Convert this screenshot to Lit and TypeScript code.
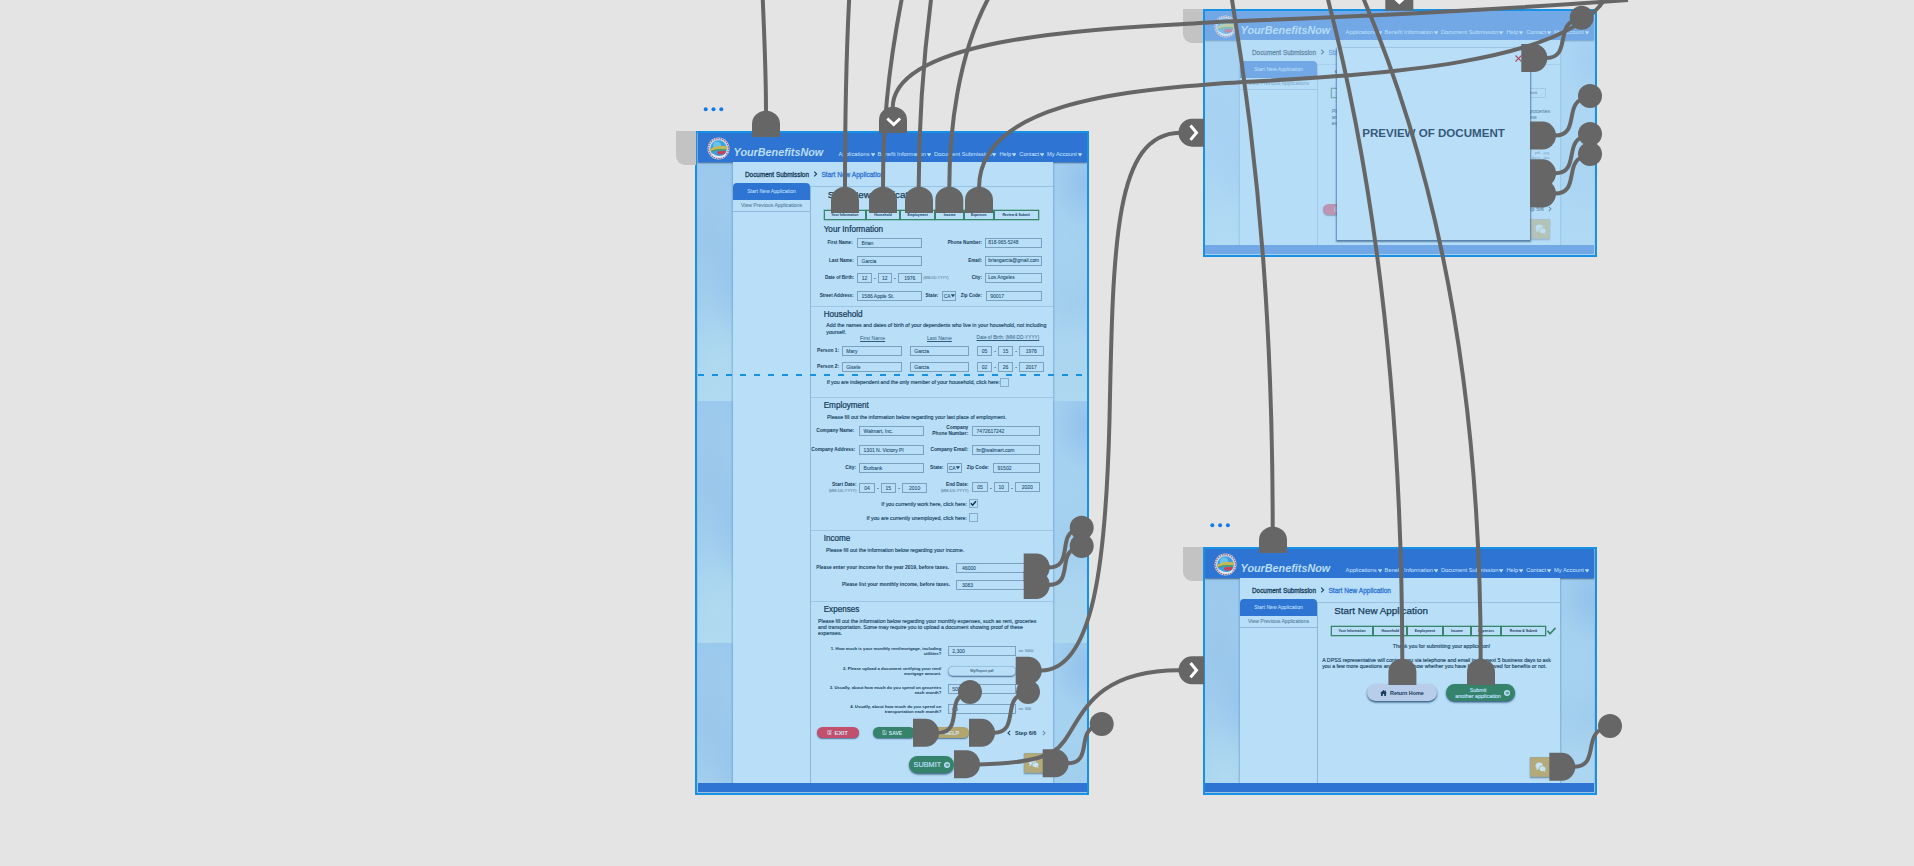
import { LitElement, html, svg, css, nothing } from "lit";
import { customElement, property } from "lit/decorators.js";

type Cell = [x: number, width: number, kind: string, text?: string];
type Row = [top: number, height: number, cells: Cell[]];

const FULL: Cell[] = [[0, 243, "rule"]];

const dates = (xs: number[], values: string[], y = "date"): Cell[] => [
  [xs[0], xs[1] - xs[0], y, values[0]],
  [xs[1], xs[2] - xs[1], "dash", "-"],
  [xs[2], xs[3] - xs[2], y, values[1]],
  [xs[3], xs[4] - xs[3], "dash", "-"],
  [xs[4], xs[5] - xs[4], y, values[2]],
];

const EXPENSE_TEXT =
  "Please fill out the information below regarding your monthly expenses, such as rent, groceries\nand transportation. Some may require you to upload a document showing proof of these\nexpenses.";

const FORM: Row[] = [
  [4, 10, [[17.7, 150, "title", "Start New Application"]]],
  [24, 9.6, [[13.7, 215, "steps"]]],
  [39.3, 10, [[13.7, 150, "heading", "Your Information"]]],
  [52, 10, [[2, 40.7, "label", "First Name:"], [47.3, 64.4, "input", "Brian"], [130, 42, "label", "Phone Number:"], [175.3, 57, "input tight", "818-965-5248"]]],
  [70, 9.6, [[2, 41.7, "label", "Last Name:"], [47.3, 64.4, "input", "Garcia"], [130, 42, "label", "Email:"], [175.3, 57, "input tight", "briangarcia@gmail.com"]]],
  [87.3, 9.6, [[2, 42, "label", "Date of Birth:"], ...dates([47.3, 61.7, 68, 81.7, 88, 111.7], ["12", "12", "1976"]), [113.3, 25, "note", "(MM-DD-YYYY)"], [140, 32, "label", "City:"], [175.3, 57, "input tight", "Los Angeles"]]],
  [105, 10, [[2, 41.7, "label", "Street Address:"], [47.3, 64.4, "input", "1586 Apple St."], [114, 14.3, "label", "State:"], [132, 14.5, "select", "CA"], [149, 23, "label", "Zip Code:"], [176, 56.3, "input", "90017"]]],
  [120, 1, FULL],
  [124.3, 10, [[13.7, 150, "heading", "Household"]]],
  [136.4, 12.4, [[16.3, 226, "para", "Add the names and dates of birth of your dependents who live in your household, not including\nyourself."]]],
  [148.8, 6, [[50, 30, "under", "First Name"], [117, 30, "under", "Last Name"], [166.5, 70, "under small", "Date of Birth: (MM-DD-YYYY)"]]],
  [160, 10, [[2, 27, "label big", "Person 1:"], [32, 59.7, "input", "Mary"], [100, 58.7, "input", "Garcia"], ...dates([167, 182, 188, 203, 209, 233.7], ["05", "15", "1978"])]],
  [176, 10, [[2, 27, "label big", "Person 2:"], [32, 59.7, "input", "Gisele"], [100, 58.7, "input", "Garcia"], ...dates([167, 182, 188, 203, 209, 233.7], ["02", "26", "2017"])]],
  [192, 9, [[16.7, 172, "para line", "If you are independent and the only member of your household, click here:"], [190.3, 8.6, "check"]]],
  [211.2, 1, FULL],
  [215.3, 10, [[13.7, 150, "heading", "Employment"]]],
  [228, 6, [[17, 220, "para", "Please fill out the information below regarding your last place of employment."]]],
  [240, 10, [[1, 43.3, "label big", "Company Name:"], [49.3, 64.4, "input", "Walmart, Inc."], [118, 40.3, "label big", "Company\nPhone Number:"], [162.3, 67.5, "input", "7472617242"]]],
  [259.3, 10, [[0, 45.3, "label big", "Company Address:"], [49.3, 64.4, "input", "1301 N. Victory Pl"], [118, 40.3, "label big", "Company Email:"], [162.3, 67.5, "input", "hr@walmart.com"]]],
  [277, 10, [[1, 45, "label big", "City:"], [49.3, 64.4, "input", "Burbank"], [117, 16.5, "label big", "State:"], [137, 14.7, "select", "CA"], [155, 24, "label big", "Zip Code:"], [183.3, 46.5, "input", "91502"]]],
  [297, 10, [[1, 45.5, "label two", "Start Date:"], ...dates([49.3, 64.7, 71, 85.7, 92.3, 117], ["04", "15", "2010"]), [124, 34.5, "label two", "End Date:"], ...dates([162.3, 177.7, 184, 198.7, 205, 229.8], ["05", "10", "2020"], "date up")]],
  [313.3, 9, [[57, 100, "para end", "If you currently work here, click here:"], [159.3, 8.6, "check on"]]],
  [327.3, 9, [[57, 100, "para end", "If you are currently unemployed, click here:"], [159.3, 8.6, "check"]]],
  [344.6, 1, FULL],
  [348.3, 10, [[13.7, 150, "heading", "Income"]]],
  [361, 6, [[16, 220, "para", "Please fill out the information below regarding your income."]]],
  [377, 10, [[0, 139, "label wider", "Please enter your income for the year 2019, before taxes."], [146.3, 84, "input wide", "46000"]]],
  [394, 10, [[0, 140, "label wider", "Please list your monthly income, before taxes."], [146.3, 84, "input wide", "3083"]]],
  [415.6, 1, FULL],
  [419.3, 10, [[13.7, 150, "heading", "Expenses"]]],
  [432, 18.2, [[8, 234, "para", EXPENSE_TEXT]]],
  [460, 10, [[0, 131.3, "label small", "1. How much is your monthly rent/mortgage, including\nutilities?"], [138, 67.8, "input", "2,300"], [208.7, 20, "note plain", "ex: 3000"]]],
  [480, 10, [[0, 131.3, "label small", "2. Please upload a document verifying your rent/\nmortgage amount."], [138, 67.8, "file", "MyReport.pdf"]]],
  [498, 10, [[0, 131.3, "label small low", "3. Usually, about how much do you spend on groceries\neach month?"], [138, 67.8, "input", "500"]]],
  [518, 10, [[0, 131.3, "label small", "4. Usually, about how much do you spend on\ntransportation each month?"], [138, 67.8, "input", "60"], [208.7, 20, "note plain", "ex: 300"]]],
  [541.3, 10.8, [[6.7, 42, "pill red", "EXIT"], [63, 42, "pill green", "SAVE"], [118, 41, "pill tan", "HELP"], [197.5, 4, "prev"], [205, 24, "step", "Step 6/6"], [232, 4, "next faint"]]],
  [567.5, 20, [[99.3, 44.6, "submit", "SUBMIT"], [214, 20, "chat"]]],
];

const DONE: Row[] = [
  [4, 10, [[17.3, 150, "title", "Start New Application"]]],
  [24, 9.6, [[14, 215, "steps"], [230, 9, "tick"]]],
  [41, 7, [[0, 249, "para mid", "Thank you for submitting your application!"]]],
  [55.2, 12.4, [[5.2, 237, "para", "A DPSS representative will contact you via telephone and email in the next 5 business days to ask\nyou a few more questions and let you know whether you have been approved for benefits or not."]]],
  [82.3, 16.8, [[49.7, 70.5, "home", "Return Home"], [128.7, 69.8, "again", "Submit\nanother application"]]],
  [155, 19.8, [[213, 20, "chat"]]],
];

const UPLOAD: Row[] = [
  [4, 10, [[17.3, 150, "title", "Start New Application"]]],
  [24, 9.6, [[14, 215, "steps open"]]],
  [44.2, 18.2, [[14.7, 228, "para", EXPENSE_TEXT]]],
  [86, 11, [[195, 38, "note files", ".pdf, .jpg,\n.docx, .doc"]]],
  [140, 10.8, [[6, 42, "pill red", "EXIT"], [205.5, 24, "step", "Step 5/6"], [231, 4, "next"]]],
  [155, 19.8, [[213, 20, "chat"]]],
];

const icons = {
  down: svg`<path d="M0 .3h7v1L3.500 5.800 0 1.300z" fill="currentColor" />`,
  exit: svg`<path d="M1 1h8v1.300H2.300v5.400H9V9H1zM4 3.500h5v1.300H4zM4 6h4v1H4z" fill="currentColor" />`,
  save: svg`<path d="M1.5 1h5l2 2v6h-7zM3.5 1v2.5h3M3.5 9V6h3v3" fill="none" stroke="currentColor" />`,
};

@customElement("portal-page")
export class PortalPage extends LitElement {
  @property({ attribute: false }) rows: Row[] = [];
  @property({ type: Boolean, reflect: true }) dimmed = false;

  static styles = css`
    :host { display: flex; flex-direction: column; height: 100%; position: relative; color: #153c5a; overflow: hidden;
      font-family: "Liberation Sans", Arial, sans-serif; }
    * { box-sizing: border-box; }
    .top { height: 29px; flex: none; display: flex; background: #2e74d2; color: #b9def8; padding: 4px 5px 0 9px;
      box-shadow: 0 1px 1.5px rgba(25, 70, 120, .75); position: relative; }
    .logo { width: 23px; height: 23px; flex: none; }
    .brand { font: italic bold 10.8px/12px "Liberation Sans", Arial, sans-serif; margin: 9px 0 0 3.6px; width: 105px; }
    .menu { display: flex; flex: 1; margin-top: 14px; font-size: 5.75px; line-height: 7px; height: 7px; white-space: nowrap; justify-content: space-between; }
    .menu span { display: flex; align-items: center; gap: 1px; -webkit-text-stroke: .08px currentColor; }
    .menu svg { width: 4.200px; height: 3.6px; margin-top: .6px; }
    .body { flex: 1; min-height: 0; display: grid; grid-template-columns: 35px 320px 1fr; background: #a6cfee; }
    .sky { background:
      radial-gradient(ellipse 30px 60px at 12px 84px, rgba(150, 197, 234, .6), transparent),
      radial-gradient(ellipse 24px 60px at 34px 120px, rgba(143, 192, 235, .5), transparent),
      radial-gradient(ellipse 50px 60px at 20px 205px, rgba(178, 219, 240, .8), transparent),
      linear-gradient(#9bc9ed, #a0ccee 45%, #a6d2ef 80%, #b0d9f1);
      background-size: 100% 242px; background-position: 0 -3px; }
    .sky.r { background:
      radial-gradient(ellipse 34px 44px at 34px 24px, rgba(142, 190, 233, .8), transparent),
      radial-gradient(ellipse 34px 60px at 14px 90px, rgba(165, 211, 240, .8), transparent),
      radial-gradient(ellipse 40px 40px at 26px 140px, rgba(150, 199, 235, .4), transparent),
      linear-gradient(#a2cfef, #a4d0ee 50%, #abd5f0 80%, #aed7f0);
      background-size: 100% 242px; background-position: 0 -3px; }
    .sheet { background: #b9def8; display: grid; grid-template-columns: 78px 1fr; grid-template-rows: 24px 1fr;
      box-shadow: 0 0 1.5px 1px rgba(90, 145, 195, .55); clip-path: inset(0 -3px); }
    .crumbs { grid-column: 1 / 3; display: flex; padding: 8px 0 0 12px; font-size: 6.4px; line-height: 9px; white-space: nowrap; 
      -webkit-text-stroke: .28px currentColor; }
    .crumbs svg { width: 5px; height: 6px; margin: 1.3px 3px 0 4.5px; }
    .crumbs b { font-weight: 400; font-size: 6.58px; color: #2e74d2; }
    .side { border-right: 1px solid #8db7dc; font-size: 5.13px; text-align: center; white-space: nowrap; }
    .side div { height: 12px; line-height: 10.6px; color: #5580a2; border-bottom: 1px solid #8fb8dc; -webkit-text-stroke: .08px currentColor; }
    .side .on { height: 17px; line-height: 17px; margin-top: -3px; background: #2e74d2; color: #b9def8; border-radius: 4px 4px 0 0; border: 0; }
    .side { position: relative; }
    .main { border-top: 1px solid #98c2e4; }
    .rows { margin: -1px 0 0 -1px; }
    .row { display: flex; }
    .cell { flex: none; display: flex; align-items: center; white-space: pre; font-size: 5px; line-height: 6px; }
    .title { font-size: 9.85px; -webkit-text-stroke: .25px currentColor; }
    .heading { font-size: 8.15px; -webkit-text-stroke: .22px currentColor; }
    .rule { background: #9cc5e6; margin-right: 0; }
    .label { justify-content: flex-end; text-align: right; font-weight: 700; font-size: 4.6px; }
    .label.big, .label.two { font-size: 4.84px; }
    .label.wider { font-size: 4.92px; }
    .label.two { flex-direction: column; align-items: flex-end; line-height: 5.5px; }
    .label i { font: 400 3.9px/5px "Liberation Sans", Arial, sans-serif; color: #446d8b; }
    .label.small { font-size: 4.28px; line-height: 5px; padding-top: 0; }
    .label.low { padding-top: 2.5px; }
    .input, .date, .select, .check { border: 1px solid #7aa2c0; color: #234f70; -webkit-text-stroke: .08px currentColor; }
    .input { padding-left: 3.3px; }
    .tight { padding-left: 2.1px; font-size: 4.84px; }
    .wide { padding-left: 4.6px; }
    .date { justify-content: center; }
    .up { margin-top: -1px; margin-bottom: 1px; }
    .dash { justify-content: center; font-weight: 700; }
    .select { justify-content: center; gap: .4px; }
    .select svg { width: 3.8px; height: 3.4px; }
    .note { font-size: 3.55px; color: #446d8b; }
    .plain { font-size: 3.8px; }
    .files { font-size: 4px; line-height: 5px; text-align: right; justify-content: flex-end; }
    .under { text-decoration: underline; font-size: 5.15px; color: #305b7c; }
    .under.small { font-size: 4.75px; line-height: 5px; align-items: flex-start; }
    .para { font-size: 5.27px; line-height: 6.1px; color: #204a6a; -webkit-text-stroke: .16px currentColor; }
    .end { justify-content: flex-end; }
    .mid { justify-content: center; }
    .check { border-color: #86aecb; }
    .check svg { width: 7px; height: 7px; }
    .steps { display: grid; grid-template-columns: 42.3fr 34fr 35.3fr 28.7fr 29.7fr 45fr; }
    .steps span { height: 100%; border: 1px solid #37866c; display: grid; place-items: center; font-weight: 700; font-size: 3.4px; 
      box-shadow: 0 0 0 .3px #37866c; }
    .steps.open span:last-child { border-color: #8fb8d0; box-shadow: none; }
    .tick svg { width: 9px; height: 8px; }
    .pill { border-radius: 6px; color: #cfe6f4; font-weight: 700; font-size: 5.3px; justify-content: center; gap: 2px;
      box-shadow: 0 1px 1.5px rgba(30, 70, 110, .7); }
    .pill svg { width: 5px; height: 5px; }
    .red { background: #c24f6b; font-size: 6.1px; }
    .green { background: #35836a; font-size: 5px; padding-right: 4px; }
    .tan { background: #b1a670; }
    .step { font-weight: 700; font-size: 5.6px; }
    .prev svg, .next svg { width: 4px; height: 6px; }
    .faint { opacity: .5; }
    .submit { background: #35836a; color: #b9def8; border-radius: 9px; margin-top: 2.5px; height: 17.4px; font-size: 7.3px; gap: 2.5px;
      justify-content: center; box-shadow: 0 1.5px 2px rgba(20, 60, 90, .75); -webkit-text-stroke: .2px currentColor; }
    .submit svg { width: 6px; height: 6px; }
    .chat { background: #b4aa79; border: 1px solid #a3a88c; justify-content: center; box-shadow: 0 1px 1.5px rgba(50, 80, 100, .6); }
    .chat svg { width: 11px; height: 10px; }
    .file { border-radius: 5px; justify-content: center; font-size: 3.9px; box-shadow: 0 1px 1.5px rgba(30, 70, 110, .7), inset 0 0 0 .5px #7fa7c4; }
    .home, .again { border-radius: 9px; justify-content: center; box-shadow: 0 1.5px 2px rgba(20, 60, 100, .8); }
    .home { background: #b7cde9; font-weight: 700; font-size: 5.4px; gap: 3px; }
    .home svg { width: 7px; height: 6px; }
    .again { background: #35836a; color: #b9def8; font-size: 5.4px; text-align: center; gap: 3px; padding-left: 4px; -webkit-text-stroke: .18px currentColor; }
    .again svg { width: 6px; height: 6px; }
    .foot { height: 9px; flex: none; background: #2e74d2; position: relative; }
    .veil { position: absolute; inset: 0; background: rgba(180, 219, 247, .5); }
    .modal { position: absolute; left: 132px; top: 37px; width: 193px; height: 192px; background: #b9def8; color: #35597a;
      display: grid; place-items: center; box-shadow: 0 1px 1.5px .6px rgba(50, 95, 140, .7); font: bold 11.57px "Liberation Sans", Arial, sans-serif;
      padding: 0 0 22px 0; white-space: nowrap; }
    .close { position: absolute; width: 7px; height: 7px; left: 177.5px; top: 6.5px; }
  `;

  private chev(left = false) {
    return html`<svg viewBox="0 0 5 7"><path d=${left ? "M4 .8 1.2 3.5 4 6.2" : "M1 .8 3.8 3.5 1 6.2"} fill="none" stroke="#1c4463" stroke-width="1.3" /></svg>`;
  }

  private plus(fill: string, ink: string) {
    return html`<svg viewBox="0 0 12 12"><circle cx="6" cy="6" r="6" fill=${fill} /><path d="M3 6h5.5M6 3l3 3-3 3" stroke=${ink} stroke-width="2" fill="none" /></svg>`;
  }

  private content(kind: string, text = "") {
    switch (kind.split(" ")[0]) {
      case "steps":
        return ["Your Information", "Household", "Employment", "Income", "Expenses", "Review & Submit"].map((s) => html`<span>${s}</span>`);
      case "select":
        return html`${text}<svg viewBox="0 0 7 6">${icons.down}</svg>`;
      case "check":
        return kind.includes("on") ? html`<svg viewBox="0 0 10 10"><path d="M1.3 4.8 4 7.6 9 1.6" fill="none" stroke="#0f3350" stroke-width="2.2" /></svg>` : nothing;
      case "tick":
        return html`<svg viewBox="0 0 18 15"><path d="M1 7l5 6L17 1" fill="none" stroke="#35836a" stroke-width="3.2" /></svg>`;
      case "prev":
        return this.chev(true);
      case "next":
        return this.chev();
      case "label":
        return kind.includes("two") ? html`<span>${text}</span><i>(MM-DD-YYYY)</i>` : text;
      case "pill":
        return html`<svg viewBox="0 0 10 10">${kind.includes("red") ? icons.exit : icons.save}</svg>${text}`;
      case "submit":
        return html`${text}${this.plus("#b9def8", "#35836a")}`;
      case "again":
        return html`<span>${text}</span>${this.plus("#b9def8", "#35836a")}`;
      case "home":
        return html`<svg viewBox="0 0 14 12"><path d="M7 0 0 6.4h2V12h3.6V8h2.8v4H12V6.4h2L11.5 4V1h-2v1.3z" fill="#1c3d5c" /></svg>${text}`;
      case "chat":
        return html`<svg viewBox="0 0 22 20"><path d="M8.500 1C4 1 1 4 1 7.300c0 2.200 1.200 3.900 2.600 5L2 16c2.200-.2 3.800-1 5-2 .6-4.600 4.500-7.300 9-6.900C15.800 3.400 12.600 1 8.500 1zM15 8.500c-3.600 0-6.200 2.300-6.200 5.100S11.400 18.500 15 18.500c.9 0 1.700-.1 2.400-.4 1 .8 2.300 1.200 3.800 1.300l-1.400-2.800c.9-.8 1.400-1.900 1.400-3 0-2.800-2.600-5.100-6.200-5.100z" fill="#c4e3f5" /></svg>`;
      default:
        return text;
    }
  }

  private rowList() {
    let bottom = 0;
    return this.rows.map(([top, height, cells]) => {
      const gap = top - bottom;
      bottom = top + height;
      let right = 0;
      return html`<div class="row" style="padding-top:${gap.toFixed(2)}px;height:${(gap + height).toFixed(2)}px">
        ${cells.map(([x, w, kind, text]) => {
          const shift = x - right;
          right = x + w;
          return html`<div class="cell ${kind}" style="margin-left:${shift.toFixed(2)}px;width:${w}px">${this.content(kind, text)}</div>`;
        })}
      </div>`;
    });
  }

  render() {
    return html`
      <div class="top">
        <svg class="logo" viewBox="0 0 46 46">
          <circle cx="23" cy="23" r="22" fill="#c3dcf0" />
          <circle cx="23" cy="23" r="20" fill="none" stroke="#a2607c" stroke-width="2.600" stroke-dasharray="3 1.800" />
          <circle cx="23" cy="23" r="16.500" fill="#3c9fe0" />
          <circle cx="20" cy="17" r="8" fill="#67c3ec" />
          <path d="M6 24c10-6 24-8 34-5v6c-12-2-24-1-33 4z" fill="#c4b85a" />
          <path d="M8 28c9-4 20-5 31-3l-1 3c-11-2-21-1-29 2z" fill="#4f9c6c" />
          <path d="M20 29c6-1 12-1 18-1l-3 7H21z" fill="#c2435f" />
          <path d="M10 34c6 6 19 9 27 1" stroke="#e3eef6" stroke-width="3.500" fill="none" />
        </svg>
        <div class="brand">YourBenefitsNow</div>
        <div class="menu">
          ${["Applications", "Benefit Information", "Document Submission", "Help", "Contact", "My Account"].map(
            (m) => html`<span>${m}<svg viewBox="0 0 7 6">${icons.down}</svg></span>`,
          )}
        </div>
      </div>
      <div class="body">
        <div class="sky"></div>
        <div class="sheet">
          <div class="crumbs">Document Submission ${this.chev()} <b>Start New Application</b></div>
          <div class="side"><div class="on">Start New Application</div><div>View Previous Applications</div></div>
          <div class="main"><div class="rows">${this.rowList()}</div></div>
        </div>
        <div class="sky r"></div>
      </div>
      <div class="foot"></div>
      ${this.dimmed
        ? html`<div class="veil"></div>
            <div class="modal">PREVIEW OF DOCUMENT
              <svg class="close" viewBox="0 0 7 7"><path d="M.5.5l6 6M6.500.5l-6 6" stroke="#b04a68" stroke-width="1.100" /></svg>
            </div>`
        : nothing}
    `;
  }
}

const UP: [number, number][] = [
  [752, 110.7], [831, 186.7], [869, 186.7], [905, 186.7], [935.3, 186.7], [965, 186.7],
  [879, 106.7], [1385.3, -15.5], [1259, 526.7], [1388.4, 658.7], [1467, 658.7],
];

const EXITS: [number, number, number?, number?][] = [
  [1521.3, 44, 1581.7, 17.7], [1530, 121.6, 1590, 96], [1530, 159.3, 1590, 134], [1530, 179.6, 1590, 154],
  [1023.7, 553.5, 1081.7, 527.7], [1023.7, 571, 1081.7, 546], [1015.7, 656.7], [913, 718.8, 970, 692],
  [969, 718.8, 1028, 692], [954, 750.2], [1042.7, 749.3, 1101.7, 724], [1549.3, 752.8, 1610, 726],
];

const WIRES = [
  "M766 112C766 70 764 30 762.700 -2",
  "M845 188C845 120 846 60 849.200 -2",
  "M883 188C883 130 887 75 901.900 -2",
  "M918.700 188C918.700 130 922 70 931.200 -2",
  "M949.300 188C949.300 130 958 55 988.500 -2",
  "M892.700 108C892.700 30 1140 28 1220 21.700C1350 17 1480 11 1628 0",
  "M979 188C979 104 1120 91 1220 83.500C1340 76 1560 70 1605 -1",
  "M1231.700 -2C1262 180 1272.700 350 1272.700 528",
  "M1327.600 -2C1380 200 1402 430 1402.300 660",
  "M1363.200 -2C1441 180 1480.700 400 1480.700 660",
  "M1041 670.500C1094 670 1106 560 1109.500 420C1113 240 1115 134 1180 132.700",
  "M979 764.500C1010 764 1040 760 1054 751C1080 735 1078 670 1180 670.300",
];

@customElement("app-root")
export class AppRoot extends LitElement {
  static styles = css`
    :host { display: block; position: relative; width: 1914px; height: 866px; background: #e4e4e4; overflow: hidden; }
    .board { position: absolute; width: 394px; height: 248px; border: 2px solid #1592e6; background: #9fbfdc; padding: 0 1px 1px 0; box-sizing: border-box; }
    .form { left: 695px; top: 131px; height: 664px; padding: 0 0 1px 1px; }
    .preview { left: 1203px; top: 9px; }
    .done { left: 1203px; top: 547px; }
    .wires { position: absolute; left: 0; top: 0; }
  `;

  private tab = (x: number, y: number) => svg`<path d="M${x} ${y}h20v34h-11a9 9 0 0 1-9-9z" fill="#c3c3c3" />`;

  private dots = (x: number, y: number) => [0, 7.8, 15.6].map((d) => svg`<circle cx=${x + d} cy=${y} r="2" fill="#157ce2" />`);

  render() {
    return html`
      <portal-page class="board form" .rows=${FORM}></portal-page>
      <portal-page class="board preview" .rows=${UPLOAD} dimmed></portal-page>
      <portal-page class="board done" .rows=${DONE}></portal-page>
      <svg class="wires" width="1914" height="866" viewBox="0 0 1914 866">
        ${this.tab(676, 131)}${this.tab(1183, 9)}${this.tab(1183, 547)}
        ${this.dots(705.7, 109.3)}${this.dots(1212.3, 525.3)}
        <path d="M698 375h387" stroke="#1592e6" stroke-width="2" stroke-dasharray="6 8" />
        <g fill="none" stroke="#666" stroke-width="4">
          ${WIRES.map((d) => svg`<path d=${d} />`)}
          ${EXITS.map(([x, y, cx, cy]) =>
            cx === undefined || cy === undefined
              ? nothing
              : svg`<path d="M${x + 25} ${y + 14}C${x + 49} ${y + 14} ${x + 35} ${cy + 10} ${cx - 8} ${cy + 3}" />`,
          )}
        </g>
        <g fill="#666">
          ${UP.map(([x, y]) => svg`<path d="M${x} ${y + 26.300}v-13a14 13.300 0 0 1 28 0v13z" />`)}
          ${EXITS.map(([x, y]) => svg`<path d="M${x} ${y}h12.500a13.500 14 0 0 1 0 28h-12.500z" />`)}
          ${EXITS.map(([, , cx, cy]) => (cx === undefined ? nothing : svg`<circle cx=${cx} cy=${cy!} r="12" />`))}
          ${[132.700, 670.300].map((y) => svg`<path d="M1204 ${y - 14}h-12a13.500 14 0 0 0 0 28h12z" />`)}
        </g>
        <g fill="none" stroke="#fff" stroke-width="3">
          <path d="M887.300 118.500l6.400 6 6.400-6" />
          <path d="M1393 -3.500l6.400 6 6.400-6" />
          <path d="M1190.500 125.500l6 7.200-6 7.200" />
          <path d="M1190.500 663l6 7.200-6 7.200" />
        </g>
      </svg>
    `;
  }
}
